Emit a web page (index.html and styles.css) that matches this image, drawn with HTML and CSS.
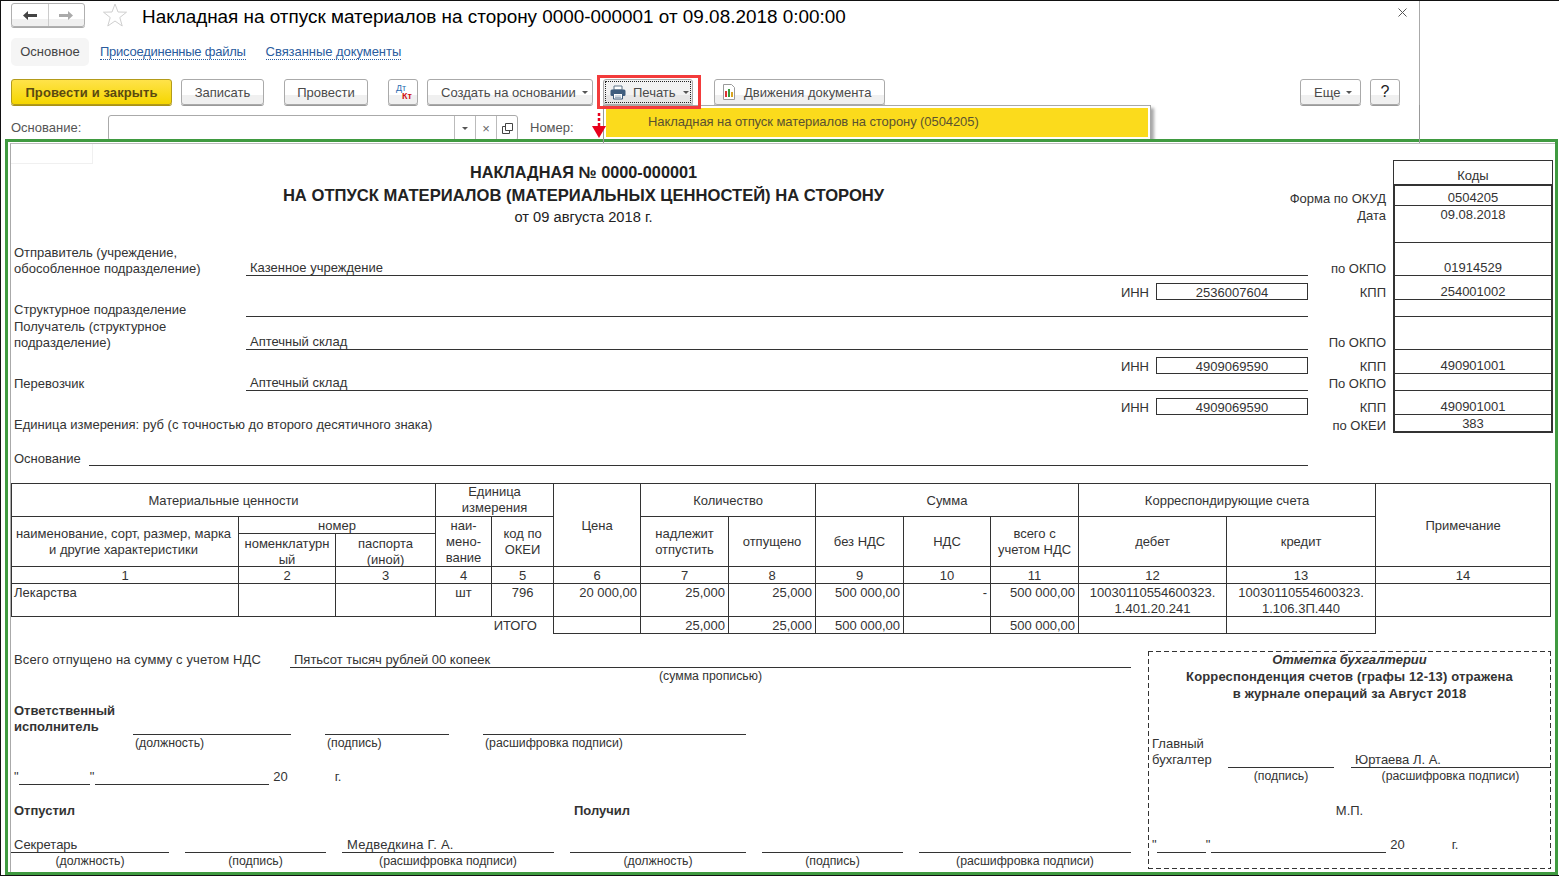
FILE: index.html
```html
<!DOCTYPE html>
<html lang="ru">
<head>
<meta charset="utf-8">
<title>Накладная</title>
<link rel="stylesheet" href="styles.css">
</head>
<body>
<div class="window">
  <header class="form">
    <div class="title-row">
      <div class="nav">
        <span class="nav-btn"><svg width="14" height="9" viewBox="0 0 14 9"><path d="M0 4.5 L5 0 V3 H14 V6 H5 V9 Z" fill="#444"/></svg></span>
        <span class="nav-btn"><svg width="14" height="9" viewBox="0 0 14 9"><path d="M14 4.5 L9 0 V3 H0 V6 H9 V9 Z" fill="#aaa"/></svg></span>
      </div>
      <svg class="star" width="26" height="26" viewBox="0 0 26 26"><path d="M13 2 L16 10 L24.5 10.2 L17.8 15.5 L20.2 24 L13 19 L5.8 24 L8.2 15.5 L1.5 10.2 L10 10 Z" fill="#fff" stroke="#cfcfcf"/></svg>
      <h1 class="doc-title">Накладная на отпуск материалов на сторону 0000-000001 от 09.08.2018 0:00:00</h1>
      <svg class="close" width="9" height="9" viewBox="0 0 9 9"><path d="M0.5 0.5 L8.5 8.5 M8.5 0.5 L0.5 8.5" stroke="#555" fill="none"/></svg>
    </div>
    <nav class="tabs">
      <span class="tab-active">Основное</span>
      <a class="tab-link">Присоединенные файлы</a>
      <a class="tab-link tab-link-2">Связанные документы</a>
    </nav>
    <div class="toolbar">
      <span class="btn btn-primary">Провести и закрыть</span>
      <span class="btn btn-save">Записать</span>
      <span class="btn btn-post">Провести</span>
      <span class="btn btn-dtkt"><span class="dt">Дт</span><span class="kt">Кт</span></span>
      <span class="btn btn-create">Создать на основании<i class="caret"></i></span>
      <span class="btn btn-print">
        <svg width="16" height="15" viewBox="0 0 16 15"><path d="M4 1 H12 V5 H4 Z" fill="#fff" stroke="#5f7488"/><rect x="0.5" y="4.5" width="15" height="6.5" rx="1.5" fill="#3f5d7d"/><path d="M3.5 8.5 H12.5 V14 H3.5 Z" fill="#fff" stroke="#3f5d7d"/><path d="M5 11 H11 M5 12.5 H11" stroke="#9fb0c0"/></svg>
        <span>Печать</span><i class="caret caret-print"></i>
      </span>
      <span class="btn btn-moves">
        <svg width="14" height="16" viewBox="0 0 14 16"><path d="M1.5 0.5 H9.5 L12.5 3.5 V15.5 H1.5 Z" fill="#fff" stroke="#9a9a9a"/><rect x="3" y="7" width="2" height="6" fill="#d33"/><rect x="6" y="5" width="2" height="8" fill="#3a9a3a"/><rect x="9" y="8" width="2" height="5" fill="#d9a520"/></svg>
        Движения документа
      </span>
      <span class="btn btn-more">Еще<i class="caret"></i></span>
      <span class="btn btn-help">?</span>
    </div>
    <div class="fields">
      <span class="field-label">Основание:</span>
      <div class="input">
        <span class="input-btn"><i class="caret"></i></span>
        <span class="input-btn input-x">×</span>
        <span class="input-btn"><svg width="11" height="11" viewBox="0 0 11 11"><path d="M3.5 0.5 H10.5 V7.5 H3.5 Z M3.5 3.5 H0.5 V10.5 H7.5 V7.5" fill="none" stroke="#444"/></svg></span>
      </div>
      <span class="field-num">Номер:</span>
    </div>
    <div class="print-mark"></div>
    <svg class="print-arrow" width="14" height="26" viewBox="0 0 14 26"><path d="M7 0 V3 M7 5 V8 M7 10 V13" stroke="#e8001c" stroke-width="2.5" fill="none"/><path d="M0 13 H14 L7 25 Z" fill="#e8001c"/></svg>
    <div class="popup"><div class="popup-item">Накладная на отпуск материалов на сторону (0504205)</div></div>
  </header>

  <main class="frame">
    <div class="sheet">
      <div class="sheet-corner"></div>

      <section class="head">
        <div class="report-title">
          <div class="t1 t1-a">НАКЛАДНАЯ № 0000-000001</div>
          <div class="t1">НА ОТПУСК МАТЕРИАЛОВ (МАТЕРИАЛЬНЫХ ЦЕННОСТЕЙ) НА СТОРОНУ</div>
          <div class="t2">от 09 августа 2018 г.</div>
        </div>
        <div class="lab lab-wide">&nbsp;</div><div class="code code-head">Коды</div>

        <div class="lab lab-wide">Форма по ОКУД</div><div class="code code-first">0504205</div>
        <div class="lab lab-wide lab-top">Дата</div><div class="code code-top">09.08.2018</div>

        <div class="who">Отправитель (учреждение,<br>обособленное подразделение)</div>
        <div class="val">Казенное учреждение</div>
        <div class="lab">по ОКПО</div><div class="code">01914529</div>

        <div class="inn-label">ИНН</div><div class="inn-box">2536007604</div>
        <div class="lab">КПП</div><div class="code">254001002</div>

        <div class="who">Структурное подразделение</div>
        <div class="val"></div>
        <div class="lab"></div><div class="code"></div>

        <div class="who">Получатель (структурное<br>подразделение)</div>
        <div class="val">Аптечный склад</div>
        <div class="lab">По ОКПО</div><div class="code"></div>

        <div class="inn-label">ИНН</div><div class="inn-box">4909069590</div>
        <div class="lab">КПП</div><div class="code">490901001</div>

        <div class="who">Перевозчик</div>
        <div class="val">Аптечный склад</div>
        <div class="lab">По ОКПО</div><div class="code"></div>

        <div class="inn-label">ИНН</div><div class="inn-box">4909069590</div>
        <div class="lab">КПП</div><div class="code">490901001</div>

        <div class="who who-wide">Единица измерения: руб (с точностью до второго десятичного знака)</div>
        <div class="lab">по ОКЕИ</div><div class="code code-last">383</div>
      </section>

      <div class="basis"><span class="basis-label">Основание</span><span class="basis-line"></span></div>

      <table class="grid">
        <colgroup>
          <col class="c227"><col class="c97"><col class="c100"><col class="c56"><col class="c62"><col class="c87"><col class="c88"><col class="c87"><col class="c88"><col class="c87"><col class="c88"><col class="c148"><col class="c149"><col class="c175">
        </colgroup>
        <tr class="h32">
          <td colspan="3">Материальные ценности</td>
          <td colspan="2" class="tight">Единица<br>измерения</td>
          <td rowspan="3">Цена</td>
          <td colspan="2">Количество</td>
          <td colspan="3">Сумма</td>
          <td colspan="2">Корреспондирующие счета</td>
          <td rowspan="3">Примечание</td>
        </tr>
        <tr class="h17">
          <td rowspan="2" class="td-name">наименование, сорт, размер, марка<br>и другие характеристики</td>
          <td colspan="2">номер</td>
          <td rowspan="2">наи-<br>мено-<br>вание</td>
          <td rowspan="2">код по<br>ОКЕИ</td>
          <td rowspan="2">надлежит<br>отпустить</td>
          <td rowspan="2">отпущено</td>
          <td rowspan="2">без НДС</td>
          <td rowspan="2">НДС</td>
          <td rowspan="2">всего с<br>учетом НДС</td>
          <td rowspan="2">дебет</td>
          <td rowspan="2">кредит</td>
        </tr>
        <tr class="h33">
          <td><div class="cell2">номенклатурн<br>ый</div></td>
          <td><div class="cell2">паспорта<br>(иной)</div></td>
        </tr>
        <tr class="h17">
          <td>1</td><td>2</td><td>3</td><td>4</td><td>5</td><td>6</td><td>7</td><td>8</td><td>9</td><td>10</td><td>11</td><td>12</td><td>13</td><td>14</td>
        </tr>
        <tr class="h33 row-data">
          <td class="left">Лекарства</td><td></td><td></td><td>шт</td><td>796</td>
          <td class="num">20 000,00</td><td class="num">25,000</td><td class="num">25,000</td><td class="num">500 000,00</td><td class="num">-</td><td class="num">500 000,00</td>
          <td><div class="cell2">10030110554600323.<br>1.401.20.241</div></td><td><div class="cell2">10030110554600323.<br>1.106.3П.440</div></td><td></td>
        </tr>
        <tr class="h17">
          <td colspan="4" class="bare bare-first"></td><td class="bare total-cell">ИТОГО</td>
          <td></td><td class="num">25,000</td><td class="num">25,000</td><td class="num">500 000,00</td><td></td><td class="num">500 000,00</td><td></td><td></td>
          <td class="bare bare-last"></td>
        </tr>
      </table>

      <section class="foot">
        <div class="foot-left">
          <div class="total-row"><span class="total-label">Всего отпущено на сумму с учетом НДС</span><span class="total-val">Пятьсот тысяч рублей 00 копеек</span></div>
          <div class="total-cap">(сумма прописью)</div>

          <div class="resp">
            <div class="resp-label">Ответственный<br>исполнитель</div>
            <div class="sig sig-158"><span class="sig-line"></span><span class="sig-cap">(должность)</span></div>
            <div class="sig sig-124"><span class="sig-line"></span><span class="sig-cap">(подпись)</span></div>
            <div class="sig sig-263"><span class="sig-line"></span><span class="sig-cap">(расшифровка подписи)</span></div>
          </div>

          <div class="date"><span>"</span><span class="date-d"></span><span>"</span><span class="date-m"></span><span class="date-y">20</span><span class="date-g">г.</span></div>

          <div class="who-row"><b class="who-a">Отпустил</b><b>Получил</b></div>
          <div class="sign-grid">
            <span class="sign-line sign-first">Секретарь</span><span class="sign-line"></span><span class="sign-line sign-name">Медведкина Г. А.</span>
            <span class="sign-line"></span><span class="sign-line"></span><span class="sign-line"></span>
            <span class="sign-cap">(должность)</span><span class="sign-cap">(подпись)</span><span class="sign-cap">(расшифровка подписи)</span>
            <span class="sign-cap">(должность)</span><span class="sign-cap">(подпись)</span><span class="sign-cap">(расшифровка подписи)</span>
          </div>
        </div>

        <aside class="mark">
          <div class="mark-title">Отметка бухгалтерии</div>
          <div class="mark-bold">Корреспонденция счетов (графы 12-13) отражена</div>
          <div class="mark-bold">в журнале операций за Август 2018</div>
          <div class="chief">Главный</div>
          <div class="chief-row"><span class="chief-label">бухгалтер</span><span class="chief-sig"></span><span class="chief-name">Юртаева Л. А.</span></div>
          <div class="chief-caps"><span class="chief-cap1">(подпись)</span><span class="chief-cap2">(расшифровка подписи)</span></div>
          <div class="mp">М.П.</div>
          <div class="mark-date"><span>"</span><span class="md-d"></span><span>"</span><span class="md-m"></span><span class="date-y">20</span><span class="date-g">г.</span></div>
        </aside>
      </section>
    </div>
  </main>
</div>
</body>
</html>
```
FILE: styles.css
```css
* { box-sizing: border-box; }
html, body { margin: 0; padding: 0; height: 100%; overflow: hidden; background: #fff; }
body { font-family: "Liberation Sans", Arial, sans-serif; font-size: 13px; color: #333; }

.window { width: 1559px; height: 876px; border-top: 1px solid #111; border-left: 1px solid #111; border-bottom: 1px solid #111; position: relative; }

/* form header */
.form { position: relative; width: 1419px; height: 138px; border-right: 1px solid #aaa; padding-top: 2px; }
.form::before, .form::after { content: ""; position: absolute; top: 104px; width: 1px; height: 38px; background: #999; z-index: 3; }
.form::before { left: 602px; }
.form::after { left: 1418px; }
.title-row { display: flex; align-items: center; height: 24px; padding-left: 10px; }
.nav { display: flex; width: 74px; height: 24px; border: 1px solid #b0b0b0; border-radius: 3px; box-shadow: 0 1px 0 #aaa; background: linear-gradient(#fff 70%, #f0f0f0 70%); }
.nav-btn { flex: 1; display: flex; align-items: center; justify-content: center; }
.nav-btn + .nav-btn { border-left: 1px solid #ccc; }
.star { margin-left: 17px; flex: none; }
.doc-title { margin: 3px 0 0 14px; font-weight: 400; font-size: 18.9px; color: #000; white-space: nowrap; }
.close { margin-left: auto; margin-right: 12px; margin-top: -6px; }

.tabs { display: flex; align-items: flex-start; height: 28px; margin-top: 11px; padding-left: 10px; }
.tab-active { width: 78px; height: 28px; line-height: 28px; text-align: center; background: #f5f5f5; border-radius: 5px; color: #444; }
.tab-link { margin: 7px 0 0 11px; color: #2b5c9e; border-bottom: 1px dotted #2b5c9e; line-height: 14px; letter-spacing: -0.25px; }
.tab-link-2 { margin-left: 20px; letter-spacing: -0.05px; }

.toolbar { display: flex; height: 26px; margin-top: 13px; padding-left: 10px; padding-right: 19px; }
.btn { display: flex; align-items: center; justify-content: center; height: 26px; border: 1px solid #aaa; border-radius: 3px; color: #4a4a4a; background: linear-gradient(#fff 62%, #f0f0f0 62%); box-shadow: 0 1px 0 #999; white-space: nowrap; }
.btn-primary { width: 161px; font-weight: 700; letter-spacing: 0.1px; color: #5a4a10; border-color: #b39b1a; background: linear-gradient(#ffe34a, #f5d600); box-shadow: 0 1px 0 #a89214; }
.btn-save { width: 83px; margin-left: 9px; }
.btn-post { width: 84px; margin-left: 20px; }
.btn-dtkt { width: 30px; margin-left: 20px; position: relative; font-size: 9px; font-weight: 700; display: block; }
.dt { position: absolute; left: 7px; top: 3px; color: #2b6cb0; font-weight: 400; line-height: 10px; }
.kt { position: absolute; left: 13px; top: 11px; color: #d01010; line-height: 10px; }
.btn-create { width: 166px; margin-left: 9px; justify-content: flex-start; padding-left: 13px; }
.btn-print { width: 90px; margin-left: 10px; gap: 7px; justify-content: flex-start; padding-left: 6px; outline: 1px dotted #222; outline-offset: -3px; background: linear-gradient(#f2f2f2 62%, #e6e6e6 62%); }
.btn-moves { width: 171px; margin-left: 21px; gap: 8px; justify-content: flex-start; padding-left: 7px; }
.btn-more { width: 61px; margin-left: auto; justify-content: flex-start; padding-left: 13px; }
.btn-help { width: 30px; margin-left: 9px; font-size: 16px; color: #222; }
.caret { display: inline-block; width: 0; height: 0; margin-left: 6px; border-left: 3px solid transparent; border-right: 3px solid transparent; border-top: 3px solid #555; }
.caret-print { margin-left: 0; }

.fields { display: flex; align-items: flex-start; margin-top: 10px; padding-left: 10px; height: 25px; }
.field-label { width: 97px; line-height: 25px; color: #555; }
.input { display: flex; justify-content: flex-end; width: 410px; height: 26px; border: 1px solid #aaa; border-radius: 3px; }
.input-btn { display: flex; align-items: center; justify-content: center; width: 21px; border-left: 1px solid #bbb; }
.input-btn .caret { margin: 0; }
.input-x { color: #666; }
.field-num { margin-left: 12px; line-height: 25px; color: #555; }

.print-mark { position: absolute; left: 596px; top: 74px; width: 104px; height: 34px; border: 3px solid #f33b3b; z-index: 3; }
.print-arrow { position: absolute; left: 591px; top: 112px; z-index: 4; }
.popup { position: absolute; left: 602px; top: 104px; width: 548px; height: 38px; padding: 2px; background: #fff; border: 1px solid #a8a8a8; box-shadow: 3px 3px 3px rgba(0,0,0,.35); z-index: 1; }
.popup-item { height: 29px; line-height: 27px; padding-left: 42px; background: #fbdb1c; color: #5a5230; letter-spacing: -0.08px; }

/* document frame */
.frame { position: relative; z-index: 2; margin-left: 4px; width: 1553px; height: 736px; border: 3px solid #3f9a40; background: #fff; }
.sheet { height: calc(100% - 1px); margin-top: 1px; margin-left: 2px; border-top: 1px solid #bbb; border-left: 1px solid #aaa; position: relative; padding-top: 16px; }
.sheet-corner { position: absolute; left: 0; top: 0; width: 82px; height: 20px; border-right: 1px solid #f0f0f0; border-bottom: 1px solid #f0f0f0; }

.head { display: grid; grid-template-columns: 235px 872px 38px 152px 85px 160px; grid-template-rows: 24px 22px 37px 33px 24px 17px 33px 24px 17px 24px 18px; line-height: 16px; }
.report-title { grid-column: 1 / 4; grid-row: 1 / 4; text-align: center; color: #222; padding-top: 1px; }
.t1 { font-size: 16.6px; font-weight: 700; line-height: 23px; }
.t1-a { font-size: 16.3px; }
.t2 { font-size: 14.7px; line-height: 19px; padding-top: 1px; box-sizing: content-box; }
.head > div { align-self: end; }
.head > .report-title { align-self: start; }
.lab { grid-column: 5; padding-right: 7px; text-align: right; white-space: nowrap; margin-bottom: -1px; }
.lab-wide { grid-column: 4 / 6; }
.head > .lab-top { align-self: start; margin-top: 2px; }
.who { grid-column: 1; padding-left: 3px; white-space: nowrap; margin-bottom: -1px; }
.who-wide { grid-column: 1 / 5; margin-bottom: 0; }
.head > .val { grid-column: 2 / 5; height: 100%; display: flex; align-items: flex-end; padding-left: 4px; border-bottom: 1px solid #333; line-height: 14px; }
.inn-label { grid-column: 3; text-align: right; white-space: nowrap; padding-right: 7px; margin-bottom: -1px; }
.inn-box { grid-column: 4; height: 17px; line-height: 17px; text-align: center; border: 1px solid #333; }
.head > .code { grid-column: 6; height: 100%; display: flex; align-items: flex-end; justify-content: center; border-left: 2px solid #333; border-right: 2px solid #333; border-bottom: 1px solid #333; line-height: 14px; }
.head > .code-head { border-width: 1px 1px 0; border-style: solid; border-color: #333; line-height: 16px; }
.head > .code-first { border-top: 2px solid #333; }
.head > .code-top { align-items: flex-start; padding-top: 1px; line-height: 16px; }
.head > .code-last { border-bottom: 2px solid #333; align-items: center; padding-top: 1px; line-height: 16px; }

.basis { display: flex; align-items: flex-end; height: 33px; }
.basis-label { width: 78px; padding-left: 3px; line-height: 16px; margin-bottom: -1px; }
.basis-line { width: 1219px; border-bottom: 1px solid #333; }

/* table */
.grid { margin-top: 17px; width: 1539px; table-layout: fixed; border-collapse: collapse; line-height: 16px; }
.grid td { border: 1px solid #333; padding: 1px 0 0; text-align: center; vertical-align: middle; overflow: hidden; white-space: nowrap; }
.c227 { width: 227px; } .c97 { width: 97px; } .c100 { width: 100px; } .c56 { width: 56px; } .c62 { width: 62px; }
.c87 { width: 87px; } .c88 { width: 88px; } .c148 { width: 148px; } .c149 { width: 149px; } .c175 { width: 175px; }
.h32 { height: 33px; } .h17 { height: 17px; } .h33 { height: 33px; }
.grid .h17 td { line-height: 14px; padding-top: 2px; }
.grid .h17 td[rowspan] { line-height: 16px; padding-top: 1px; }
.grid td.tight { padding-top: 0; vertical-align: bottom; }
.grid td.td-name { padding-right: 3px; }
.cell2 { margin-bottom: -2px; }
.grid .row-data td { vertical-align: top; }
.grid td.left { text-align: left; padding-left: 2px; }
.grid td.num { text-align: right; padding-right: 3px; }
.grid td.bare { border-left: 0; border-bottom: 0; }
.grid td.bare-first { border-right: 0; }
.grid td.bare-last { border-right: 0; }
.grid td.total-cell { padding-right: 14px; }

/* footer */
.foot { display: flex; margin-top: 17px; line-height: 16px; }
.foot-left { width: 1120px; flex: none; }
.total-row { display: flex; height: 17px; padding-top: 1px; }
.total-label { width: 279px; padding-left: 3px; white-space: nowrap; letter-spacing: 0.13px; }
.total-val { flex: 1; padding-left: 4px; margin-top: -1px; padding-top: 1px; border-bottom: 1px solid #333; }
.total-cap { padding-left: 279px; text-align: center; font-size: 12.3px; }
.resp { display: flex; margin-top: 18px; height: 50px; }
.resp-label { width: 122px; padding: 1px 0 0 3px; font-weight: 700; height: 33px; white-space: nowrap; }
.sig { display: flex; flex-direction: column; }
.sig-line { height: 33px; flex: none; border-bottom: 1px solid #333; }
.sig-cap { padding-left: 2px; white-space: nowrap; font-size: 12.3px; }
.sig-158 { width: 158px; }
.sig-124 { width: 124px; margin-left: 34px; }
.sig-263 { width: 263px; margin-left: 34px; }
.date { display: flex; margin-top: 17px; padding-left: 3px; height: 16px; }
.date-d { width: 71px; margin-top: -1px; border-bottom: 1px solid #333; }
.date-m { width: 174px; margin-top: -1px; border-bottom: 1px solid #333; margin-left: 1px; }
.date-y { margin-left: 4px; }
.date-g { margin-left: 47px; }
.who-row { display: flex; margin-top: 18px; padding-left: 3px; height: 16px; }
.who-a { width: 560px; }
.sign-grid { display: grid; grid-template-columns: 158px 141px 212px 176px 141px 212px; column-gap: 16px; margin-top: 17px; }
.sign-line { height: 17px; padding-top: 1px; border-bottom: 1px solid #333; white-space: nowrap; }
.sign-first { padding-left: 3px; }
.sign-name { padding-left: 5px; letter-spacing: 0.25px; }
.sign-cap { text-align: center; white-space: nowrap; font-size: 12.3px; }

.mark { width: 403px; height: 218px; margin-left: 17px; padding: 1px; flex: none;
  background:
    repeating-linear-gradient(90deg, #333 0 5px, transparent 5px 8px) top left / 100% 1px no-repeat,
    repeating-linear-gradient(90deg, #333 0 5px, transparent 5px 8px) bottom left / 100% 1px no-repeat,
    repeating-linear-gradient(180deg, #333 0 5px, transparent 5px 8px) top left / 1px 100% no-repeat,
    repeating-linear-gradient(180deg, #333 0 5px, transparent 5px 8px) top right / 1px 100% no-repeat; }
.mark-title { text-align: center; font-style: italic; font-weight: 700; }
.mark-bold { text-align: center; font-weight: 700; line-height: 17px; letter-spacing: 0.15px; }
.chief { margin-top: 34px; padding-left: 3px; }
.chief-row { display: flex; height: 16px; }
.chief-label { width: 79px; padding-left: 3px; }
.chief-sig { width: 106px; border-bottom: 1px solid #333; }
.chief-name { flex: 1; margin-left: 17px; padding-left: 4px; border-bottom: 1px solid #333; }
.chief-caps { display: flex; font-size: 12.3px; }
.chief-cap1 { margin-left: 79px; width: 106px; text-align: center; }
.chief-cap2 { margin-left: 17px; flex: 1; text-align: center; }
.mp { margin-top: 19px; text-align: center; }
.mark-date { display: flex; margin-top: 18px; padding-left: 3px; height: 16px; }
.md-d { width: 49px; border-bottom: 1px solid #333; }
.md-m { width: 175px; margin-left: 1px; border-bottom: 1px solid #333; }
```
